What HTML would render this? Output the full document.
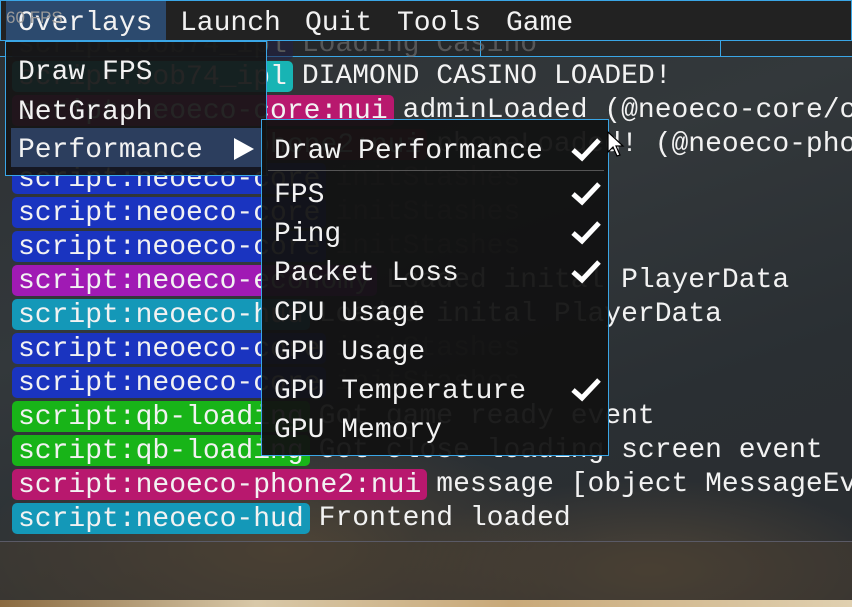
<!DOCTYPE html>
<html><head><meta charset="utf-8"><style>
*{margin:0;padding:0;box-sizing:border-box}
html{width:852px;height:607px;overflow:hidden}
body{width:852px;height:607px;overflow:hidden;position:relative;font-family:"Liberation Mono",monospace;font-size:28px;color:#f2f2f2;
background:linear-gradient(160deg,#2c3033 0%,#33383b 40%,#2a2f33 70%,#2a2d30 100%)}
.bg2{position:absolute;left:0;top:400px;width:852px;height:207px;background:radial-gradient(ellipse 300px 120px at 280px 150px,rgba(150,110,60,.35),transparent),radial-gradient(ellipse 250px 90px at 650px 170px,rgba(160,120,70,.3),transparent)}
.bot{position:absolute;left:0;top:541px;width:852px;height:60px;background:rgba(70,60,50,.55);border-top:1px solid #5a5a66}
.strip{position:absolute;left:0;top:600px;width:852px;height:7px;background:linear-gradient(90deg,#8a6a40,#d8c8a8 30%,#c8a878 60%,#e0d0b0)}
.row{position:absolute;left:12px;height:32px;line-height:34px;white-space:pre}
.b{display:inline-block;padding:0 6px;border-radius:5px;margin-right:9px;height:31px;vertical-align:top;margin-top:1px;line-height:33px}
.teal{background:#18b4b4}.mag{background:#b8186e}.blue{background:#1a34c0}.pur{background:#a01ab4}.cy{background:#1498b8}.grn{background:#18b418}.red{background:#9a1840}
.mb{position:absolute;left:0;top:0;width:852px;height:41px;background:#222;border:1px solid #3aa6e6}
.mi{position:absolute;top:7px;line-height:34px}
.dd{position:absolute;left:5px;top:41px;width:262px;height:135px;background:rgba(22,22,22,.93);border:1px solid #3aa6e6}
.sub{position:absolute;left:261px;top:119px;width:348px;height:337px;background:rgba(18,18,18,.95);border:1px solid #3aa6e6}
.it{position:absolute;white-space:pre;line-height:34px}
.ck{position:absolute;left:308px;width:32px;height:26px}
</style></head><body>
<div class="bg2"></div>
<div class="bot"></div>
<div class="strip"></div>
<div style="position:absolute;left:0;top:40px;width:852px;height:17px;background:rgba(30,32,34,.6);border-bottom:1px solid #3aa6e6"></div>
<div style="position:absolute;left:480px;top:40px;width:1px;height:17px;background:#3aa6e6"></div>
<div style="position:absolute;left:720px;top:40px;width:1px;height:17px;background:#3aa6e6"></div>
<div class="row" style="top:28px;color:#777;opacity:.6"><span class="b" style="background:#224">script:bob74_ipl</span>Loading Casino</div>
<div class="row" style="top:60px"><span class="b teal">script:bob74_ipl</span>DIAMOND CASINO LOADED!</div>
<div class="row" style="top:94px"><span class="b mag">script:neoeco-core:nui</span>adminLoaded (@neoeco-core/c</div>
<div class="row" style="top:128px"><span class="b red">script:neoeco-phone2:nui</span>phoneLoaded! (@neoeco-phone</div>
<div class="row" style="top:162px"><span class="b blue">script:neoeco-core</span><span style="color:#666">initStashes</span></div>
<div class="row" style="top:196px"><span class="b blue">script:neoeco-core</span><span style="color:#666">initStashes</span></div>
<div class="row" style="top:230px"><span class="b blue">script:neoeco-core</span><span style="color:#666">initStashes</span></div>
<div class="row" style="top:264px"><span class="b pur">script:neoeco-economy</span>Loaded inital PlayerData</div>
<div class="row" style="top:298px"><span class="b cy">script:neoeco-hud</span>Loaded inital PlayerData</div>
<div class="row" style="top:332px"><span class="b blue">script:neoeco-core</span><span style="color:#666">initStashes</span></div>
<div class="row" style="top:366px"><span class="b blue">script:neoeco-core</span><span style="color:#666">initStashes</span></div>
<div class="row" style="top:400px"><span class="b grn">script:qb-loading</span>Got game ready event</div>
<div class="row" style="top:434px"><span class="b grn">script:qb-loading</span>Got close loading screen event</div>
<div class="row" style="top:468px"><span class="b mag">script:neoeco-phone2:nui</span>message [object MessageEvent]</div>
<div class="row" style="top:502px"><span class="b cy">script:neoeco-hud</span>Frontend loaded</div>

<div class="mb"></div>
<div style="position:absolute;left:6px;top:1px;width:160px;height:39px;background:#2c4a6e"></div>
<div class="mi" style="left:18px">Overlays</div>
<div class="mi" style="left:180px">Launch</div>
<div class="mi" style="left:305px">Quit</div>
<div class="mi" style="left:397px">Tools</div>
<div class="mi" style="left:506px">Game</div>
<div style="position:absolute;left:6px;top:8px;font:17px 'Liberation Sans',sans-serif;color:#999">60 FPS</div>

<div class="dd">
<div class="it" style="left:12px;top:14px">Draw FPS</div>
<div class="it" style="left:12px;top:54px">NetGraph</div>
<div style="position:absolute;left:5px;top:86px;width:252px;height:39px;background:#2c3e5e"></div>
<div class="it" style="left:12px;top:92px">Performance</div>
<div style="position:absolute;left:228px;top:96px;width:0;height:0;border-left:20px solid #fff;border-top:11px solid transparent;border-bottom:11px solid transparent"></div>
</div>

<div class="sub">
<div class="it" style="left:12px;top:15px">Draw Performance</div>
<div style="position:absolute;left:6px;top:50px;width:336px;height:1px;background:#555"></div>
<div class="it" style="left:12px;top:59px">FPS</div>
<div class="it" style="left:12px;top:98px">Ping</div>
<div class="it" style="left:12px;top:137px">Packet Loss</div>
<div class="it" style="left:12px;top:177px">CPU Usage</div>
<div class="it" style="left:12px;top:216px">GPU Usage</div>
<div class="it" style="left:12px;top:255px">GPU Temperature</div>
<div class="it" style="left:12px;top:294px">GPU Memory</div>
<svg class="ck" style="top:16px" viewBox="0 0 32 26"><path d="M3 14 L12 22 L29 4" stroke="#fff" stroke-width="5" fill="none"/></svg>
<svg class="ck" style="top:60px" viewBox="0 0 32 26"><path d="M3 14 L12 22 L29 4" stroke="#fff" stroke-width="5" fill="none"/></svg>
<svg class="ck" style="top:99px" viewBox="0 0 32 26"><path d="M3 14 L12 22 L29 4" stroke="#fff" stroke-width="5" fill="none"/></svg>
<svg class="ck" style="top:138px" viewBox="0 0 32 26"><path d="M3 14 L12 22 L29 4" stroke="#fff" stroke-width="5" fill="none"/></svg>
<svg class="ck" style="top:256px" viewBox="0 0 32 26"><path d="M3 14 L12 22 L29 4" stroke="#fff" stroke-width="5" fill="none"/></svg>
</div>
<svg style="position:absolute;left:606px;top:130px" width="20" height="28" viewBox="0 0 20 28"><path d="M2 2 L2 22 L7 17 L11 26 L14 25 L10 16 L17 16 Z" fill="#fff" stroke="#000" stroke-width="1.2"/></svg>
</body></html>
